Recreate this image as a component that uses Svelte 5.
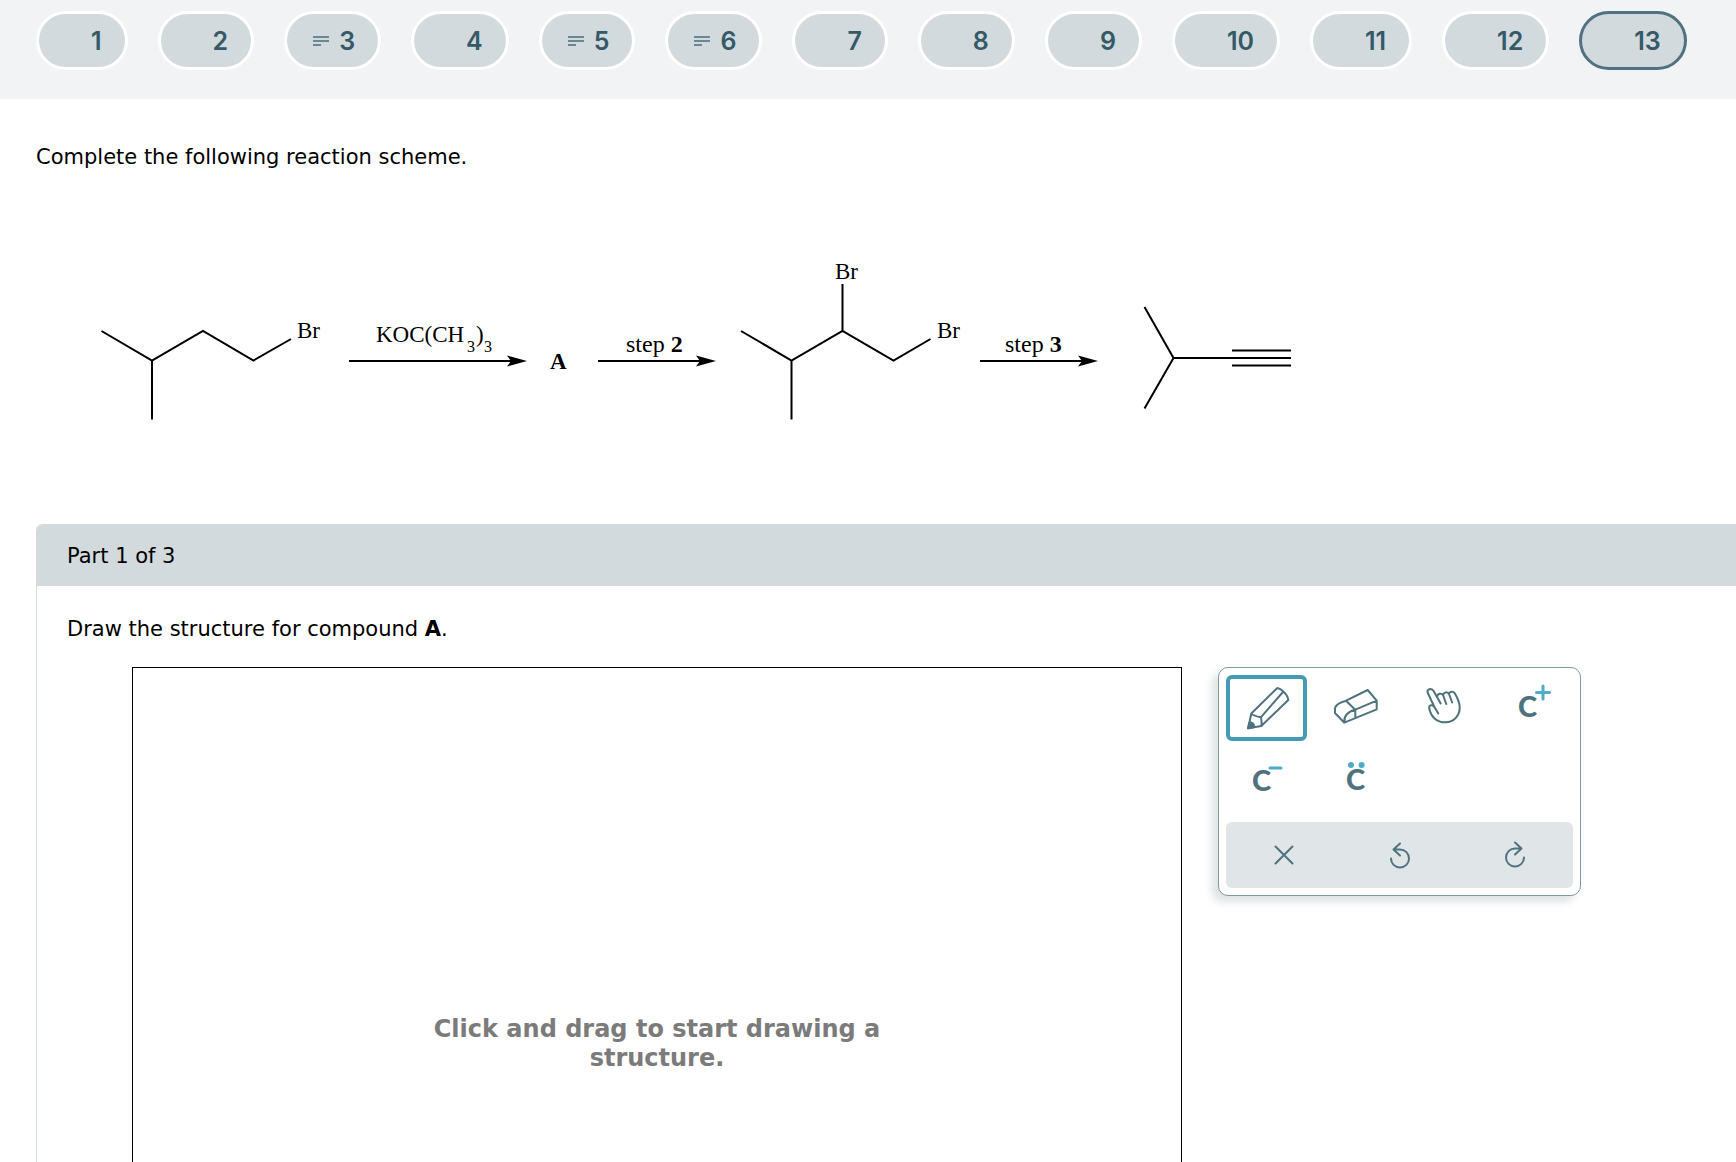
<script lang="ts">
	interface Question {
		number: number;
		noted?: boolean;
	}

	const questions: Question[] = [
		{ number: 1 },
		{ number: 2 },
		{ number: 3, noted: true },
		{ number: 4 },
		{ number: 5, noted: true },
		{ number: 6, noted: true },
		{ number: 7 },
		{ number: 8 },
		{ number: 9 },
		{ number: 10 },
		{ number: 11 },
		{ number: 12 },
		{ number: 13 }
	];

	const tools = [
		{ id: 'pencil', label: 'Pencil' },
		{ id: 'eraser', label: 'Eraser' },
		{ id: 'grab', label: 'Move' },
		{ id: 'plus', label: 'Positive charge' },
		{ id: 'minus', label: 'Negative charge' },
		{ id: 'pair', label: 'Lone pair' }
	];

	let current = $state(13);
	let tool = $state('pencil');
</script>

{#snippet arrow(x1: number, x2: number)}
	<path d="M{x1} 361H{x2 - 15}" />
	<path class="head" d="M{x2} 361L{x2 - 20} 355.5L{x2 - 16} 361L{x2 - 20} 366.5Z" />
{/snippet}

<div class="page">
	<nav class="questions" aria-label="Questions">
		{#each questions as q (q.number)}
			<button
				class="question"
				class:current={q.number === current}
				aria-current={q.number === current ? 'step' : undefined}
				onclick={() => (current = q.number)}
			>
				<span class="mark">
					{#if q.noted}
						<svg width="16" height="12" viewBox="0 0 16 12">
							<path d="M0 2H16M0 6H16M0 10H8" />
						</svg>
					{/if}
				</span>
				{q.number}
			</button>
		{/each}
	</nav>

	<main>
		<p class="prompt">Complete the following reaction scheme.</p>

		<svg class="scheme" width="1300" height="200" viewBox="36 240 1300 200">
			<path d="M101.5 331L152 360.5L203 331L253.5 360.5L291 339M152 360.5V419.5" />
			<text x="297" y="338">Br</text>

			{@render arrow(349, 527)}
			<text x="376" y="342">KOC(CH</text>
			<text class="sub" x="467" y="352">3</text>
			<text x="476" y="342">)</text>
			<text class="sub" x="484" y="352">3</text>

			<text class="bold" x="550" y="369">A</text>

			{@render arrow(598, 716)}
			<text class="step" x="626" y="352">step <tspan class="bold">2</tspan></text>

			<path d="M741 331L791.5 360.5L842.5 331L893.5 360.5L930.5 339M791.5 360.5V419.5M842.5 331V284" />
			<text x="835" y="279">Br</text>
			<text x="937" y="338">Br</text>

			{@render arrow(980, 1098)}
			<text class="step" x="1005" y="352">step <tspan class="bold">3</tspan></text>

			<path d="M1144.5 307L1173.5 358L1144.5 408.5M1173.5 358H1291M1232 350.5H1291M1232 365.5H1291" />
		</svg>

		<section class="part">
			<h2>Part 1 of 3</h2>
			<div class="part-body">
				<p>Draw the structure for compound <b>A</b>.</p>

				<div class="editor">
					<div class="canvas">
						<p>Click and drag to start drawing a structure.</p>
					</div>

					<div class="toolbox">
						<div class="tools">
							{#each tools as t (t.id)}
								<button
									class="tool"
									class:selected={tool === t.id}
									aria-label={t.label}
									aria-pressed={tool === t.id}
									onclick={() => (tool = t.id)}
								>
									<svg width="72" height="58" viewBox="0 0 72 58">
										{#if t.id === 'pencil'}
											<path
												d="M21.3 34.5L47.3 9Q50.5 9.5 53 12.3Q57.5 16 58.3 21L31.3 47L18.3 49.3ZM21.3 34.5Q23 36.8 30.8 38.3Q32 42 31.3 47M30.8 38.3L53 13"
											/>
											<path class="fill" d="M19.3 43.5Q24 43 24.3 48L18 49.3Z" />
										{:else if t.id === 'eraser'}
											<path
												d="M27 21.7L48.7 11L57.7 21.7V30.3L25.3 43.7L16 34V29.5Q16.5 24.5 27 21.7L36.3 30.7V38.7M36.3 30.7L57.7 21.7M25.3 43.7Q24.5 33.5 36.3 30.7"
											/>
										{:else if t.id === 'grab'}
											<path
												d="M32.7 24.5L25.6 12C23.5 8.3 18 10.2 19.8 14L26.7 28.5L30.3 34.5L26.7 28.5C25 25 20.5 26 21.2 29C22.5 37 28 43.3 37.7 43.3C46 43.3 51.7 36.5 51.7 28.5C51.7 23.5 49.5 19 47.2 15C45.8 12 42.5 12 41 14.5M29 18C29.5 14.5 33.8 13.5 35.2 16.5L38.3 25M35 16C36.5 12.5 40 12.5 41.2 15.5L44.2 23.5"
											/>
										{:else if t.id === 'plus'}
											<text x="21" y="38">C</text>
											<path class="accent" d="M39.5 13.5H52.5M46 7V20" />
										{:else if t.id === 'minus'}
											<text x="22" y="38">C</text>
											<path class="accent" d="M40 15H51" />
										{:else}
											<text x="27" y="37">C</text>
											<circle cx="32" cy="12" r="3" />
											<circle cx="42.6" cy="12" r="3" />
										{/if}
									</svg>
								</button>
							{/each}
						</div>

						<div class="actions">
							<button aria-label="Clear">
								<svg width="32" height="32" viewBox="0 0 32 32">
									<path d="M7.5 7.5L24.5 24.5M24.5 7.5L7.5 24.5" />
								</svg>
							</button>
							<button aria-label="Undo">
								<svg width="32" height="32" viewBox="0 0 32 32">
									<path d="M7 19.5A9 9 0 1 0 16 10.5H9.5M16 4.5L9.5 10.5L16 16.5" />
								</svg>
							</button>
							<button aria-label="Redo">
								<svg width="32" height="32" viewBox="0 0 32 32">
									<path d="M25 18.5A9 9 0 1 1 16 9.5H22.5M16 3.5L22.5 9.5L16 15.5" />
								</svg>
							</button>
						</div>
					</div>
				</div>
			</div>
		</section>
	</main>
</div>

<style>
	:global(body) {
		margin: 0;
		background: #fff;
	}

	.page {
		height: 100vh;
		overflow: hidden;
		font-family: Verdana, 'DejaVu Sans', sans-serif;
		font-size: 21px;
		line-height: 24px;
		color: #000;
	}

	p,
	h2 {
		margin: 0;
	}

	button {
		padding: 0;
		cursor: pointer;
	}

	.questions {
		display: flex;
		gap: 30px;
		height: 88px;
		padding: 11px 36px 0;
		background: #f1f3f5;
	}

	.question {
		display: flex;
		align-items: center;
		gap: 10px;
		height: 59px;
		padding: 0 23px 0 26px;
		border: 3px solid #fff;
		border-radius: 30px;
		background: #d3dadd;
		font-family: Inter, sans-serif;
		font-size: 25px;
		font-weight: 600;
		color: #345967;
	}

	.question.current {
		border-color: #4f727f;
	}

	.mark {
		display: flex;
		width: 16px;
	}

	.mark path {
		stroke: #6b8793;
		stroke-width: 2;
	}

	main {
		padding-left: 36px;
	}

	.prompt {
		padding: 46px 0 71px;
	}

	.scheme {
		display: block;
		font-family: 'Liberation Serif', serif;
		font-size: 23px;
	}

	.scheme path {
		fill: none;
		stroke: #000;
		stroke-width: 2;
	}

	.scheme .head {
		fill: #000;
		stroke: none;
	}

	.sub {
		font-size: 16px;
	}

	.step {
		font-size: 24px;
	}

	.bold {
		font-weight: 700;
	}

	.part {
		margin-top: 84px;
		border-left: 1px solid #d3dadd;
		border-top-left-radius: 6px;
	}

	.part h2 {
		padding: 20px 30px 18px;
		border-top-left-radius: 6px;
		background: #d3dadd;
		font-size: 21px;
		font-weight: 400;
	}

	.part-body {
		padding: 31px 30px;
	}

	.editor {
		display: flex;
		align-items: flex-start;
		gap: 36px;
		padding: 26px 125px 0 65px;
	}

	.canvas {
		display: flex;
		flex: 1;
		align-items: center;
		justify-content: center;
		height: 752px;
		border: 1px solid #000;
	}

	.canvas p {
		max-width: 480px;
		font-size: 24px;
		font-weight: 700;
		line-height: 29px;
		text-align: center;
		color: #7b7b7b;
	}

	.toolbox {
		box-sizing: border-box;
		width: 363px;
		padding: 7px;
		border: 1px solid #7f9aa5;
		border-radius: 10px;
		background: #fff;
		box-shadow: -6px 6px 8px #dde3e5;
	}

	.tools {
		display: grid;
		grid-template-columns: repeat(4, 1fr);
		gap: 8px;
	}

	.tool {
		display: flex;
		align-items: center;
		justify-content: center;
		height: 66px;
		border: 4px solid transparent;
		border-radius: 6px;
		background: none;
	}

	.tool.selected {
		border-color: #459bb3;
	}

	.tool path,
	.actions path {
		fill: none;
		stroke: #4f727f;
		stroke-width: 2;
		stroke-linejoin: round;
		stroke-linecap: round;
	}

	.tool .fill {
		fill: #4f727f;
	}

	.tool .accent {
		stroke: #4fabca;
		stroke-width: 3;
	}

	.tool circle {
		fill: #4fabca;
	}

	.tool text {
		fill: #4f727f;
		font-family: Lato, sans-serif;
		font-size: 29px;
		font-weight: 900;
	}

	.actions {
		display: flex;
		margin-top: 7px;
		border-radius: 6px;
		background: #e0e5e8;
	}

	.actions button {
		display: flex;
		flex: 1;
		align-items: center;
		justify-content: center;
		height: 66px;
		border: none;
		background: none;
	}
</style>
